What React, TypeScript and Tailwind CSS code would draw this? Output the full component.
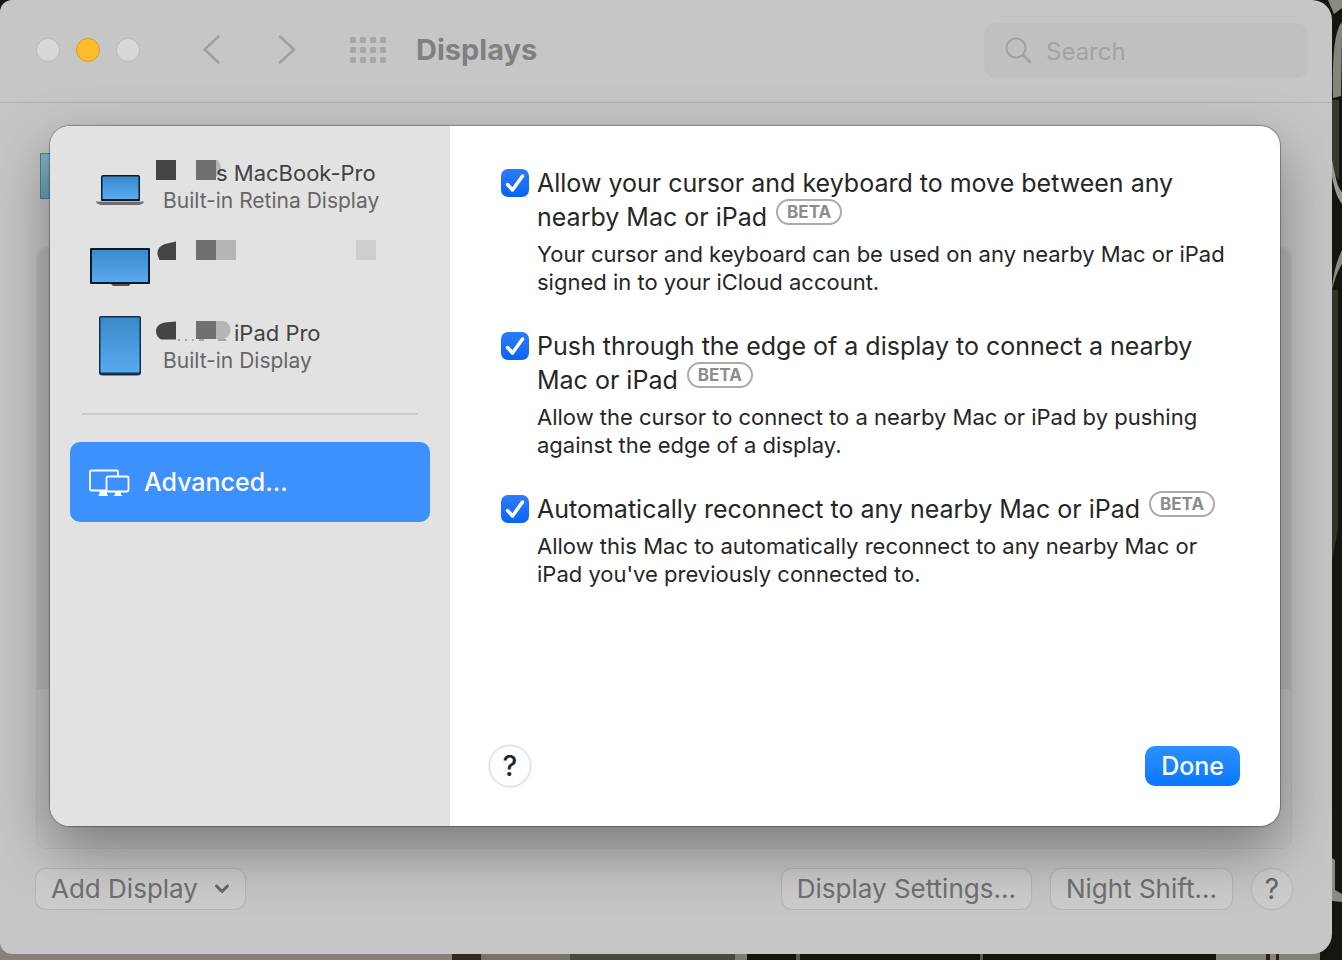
import { useState } from "react";

interface Option {
  id: string;
  title: string;
  description: string;
}

const OPTIONS: Option[] = [
  {
    id: "cursor",
    title: "Allow your cursor and keyboard to move between any nearby Mac or iPad",
    description:
      "Your cursor and keyboard can be used on any nearby Mac or iPad signed in to your iCloud account.",
  },
  {
    id: "edge",
    title: "Push through the edge of a display to connect a nearby Mac or iPad",
    description:
      "Allow the cursor to connect to a nearby Mac or iPad by pushing against the edge of a display.",
  },
  {
    id: "reconnect",
    title: "Automatically reconnect to any nearby Mac or iPad",
    description:
      "Allow this Mac to automatically reconnect to any nearby Mac or iPad you've previously connected to.",
  },
];

const DOTS = [0, 10, 20, 30];

function ScreenGradient({ id }: { id: string }) {
  return (
    <defs>
      <linearGradient id={id} x1="0" y1="0" x2="0" y2="1">
        <stop offset="0" stopColor="#3a8acb" />
        <stop offset="1" stopColor="#58aaf0" />
      </linearGradient>
    </defs>
  );
}

function MacBookIcon() {
  return (
    <svg width="60" height="60" viewBox="0 0 60 60" aria-hidden="true">
      <ScreenGradient id="macbook" />
      <rect x="11" y="19" width="39" height="27" rx="2" fill="#0b1a2b" />
      <rect x="12.5" y="20.5" width="36" height="22.5" fill="url(#macbook)" />
      <path d="M6.5 45h47v2l-4 2h-39l-4-2z" fill="#6d6d6d" />
      <path d="M7 45h46v1H7z" fill="#b5b5b5" />
    </svg>
  );
}

function MonitorIcon() {
  return (
    <svg width="60" height="60" viewBox="0 0 60 60" aria-hidden="true">
      <ScreenGradient id="monitor" />
      <path d="M20 47h21l-2 3H23z" fill="#55504c" />
      <rect x="0" y="12" width="60" height="36" rx="1" fill="#0b1a2b" />
      <rect x="2" y="14" width="56" height="32" fill="url(#monitor)" />
    </svg>
  );
}

function IPadIcon() {
  return (
    <svg width="60" height="60" viewBox="0 0 60 60" aria-hidden="true">
      <ScreenGradient id="ipad" />
      <rect x="10" y="2" width="40" height="58" rx="2.5" fill="#8b8b8b" />
      <rect x="9" y="0" width="42" height="59" rx="2" fill="#12304a" />
      <rect x="10.5" y="1.5" width="39" height="55" rx="1" fill="url(#ipad)" />
    </svg>
  );
}

function AdvancedIcon() {
  return (
    <svg width="42" height="28" viewBox="0 0 42 28" fill="none" stroke="#fff" aria-hidden="true">
      <path
        d="M18 21.5H3.5A1.5 1.5 0 0 1 2 20V3A1.5 1.5 0 0 1 3.5 1.5h25A1.5 1.5 0 0 1 30 3v4"
        strokeWidth="1.8"
      />
      <rect x="18.5" y="7.5" width="22" height="15" rx="1.5" strokeWidth="1.8" />
      <path d="M12 22h7v3l1 2h-9.5zM27 23h6v2.5l1.5 1.5h-9l1.5-1.5z" fill="#fff" stroke="none" />
    </svg>
  );
}

function Wallpaper() {
  return (
    <div className="absolute inset-0 overflow-hidden bg-[#15150f]" aria-hidden="true">
      <svg className="absolute right-0 top-0" width="20" height="960" viewBox="0 0 20 960">
        <path d="M6 0h14v8L12 14z" fill="#8b8b84" />
        <path d="M20 22c-8 8-10 40-9 76l8-2 1-60z" fill="#85857e" />
        <path d="M10 100h7v80l-7-8z" fill="#3a3a2c" />
        <path d="M10 160c4 20 6 28 10 32v12c-5-6-8-16-10-28z" fill="#9a9a95" />
        <path d="M20 250c-5 10-9 24-10 40 3-12 6-20 10-26z" fill="#8b8b84" />
        <path d="M10 290h6v240l-6 30z" fill="#33332a" />
        <path d="M10 858l3 2v30l7 4v8l-10-1z" fill="#8b8b83" />
      </svg>
      <svg
        className="absolute bottom-0 left-0 h-5 w-full"
        viewBox="0 0 1342 20"
        preserveAspectRatio="none"
      >
        <path d="M0 0h452v20H0z" fill="#85827c" />
        <path d="M452 0h29v20h-29z" fill="#2c2823" />
        <path d="M481 0h89v20h-89z" fill="#74716f" />
        <path d="M570 0h165v20H570z" fill="#4a4843" />
        <path d="M735 0h12v20h-12z" fill="#7b7a75" />
        <path d="M796 0h4v20h-4zM980 0h3v20h-3z" fill="#5a5952" />
        <path d="M1216 0h104v20h-104z" fill="#83827f" />
        <path d="M1266 0h4v20h-4zM1276 0h3v20h-3z" fill="#2e2119" />
      </svg>
    </div>
  );
}

function TitleBar() {
  return (
    <header className="flex h-[103px] items-center border-b border-[#adadad] pb-0.5 pl-9 pr-6">
      <div className="flex gap-4">
        <button type="button" aria-label="Close" className="size-6 rounded-full border border-[#b9b9b8] bg-[#d8d9d6]" />
        <button type="button" aria-label="Minimize" className="size-6 rounded-full border border-[#d99a2b] bg-[#febb2d]" />
        <button type="button" aria-label="Zoom" className="size-6 rounded-full border border-[#b9b9b8] bg-[#d8d9d6]" />
      </div>
      <div className="ml-[62px] flex items-center gap-[54px]">
        <button type="button" aria-label="Back">
          <svg width="20" height="30" viewBox="0 0 20 30" fill="none" stroke="#a0a0a0" strokeWidth="2.5" strokeLinecap="round" strokeLinejoin="round">
            <path d="M16.5 1.5L2.5 14.5l14 13" />
          </svg>
        </button>
        <button type="button" aria-label="Forward">
          <svg width="20" height="30" viewBox="0 0 20 30" fill="none" stroke="#a0a0a0" strokeWidth="2.5" strokeLinecap="round" strokeLinejoin="round">
            <path d="M4 1.5l14 13-14 13" />
          </svg>
        </button>
      </div>
      <button type="button" aria-label="Show all" className="ml-[54px]">
        <svg width="36" height="26" viewBox="0 0 36 26" fill="#a6a6a6">
          {DOTS.map((x) =>
            DOTS.slice(0, 3).map((y) => <rect key={`${x}-${y}`} x={x} y={y} width="6" height="6" rx="1.5" />)
          )}
        </svg>
      </button>
      <h1 className="ml-[30px] text-[29px] leading-8 font-bold text-[#808080]">Displays</h1>
      <label className="ml-auto flex h-[55px] w-[324px] items-center gap-[14px] rounded-xl bg-[#c0c0c0] pl-5">
        <svg width="28" height="28" viewBox="0 0 28 28" fill="none" stroke="#a0a0a0" strokeWidth="2" strokeLinecap="round" aria-hidden="true">
          <circle cx="12" cy="12" r="9.5" />
          <path d="M19 19l7 7" strokeWidth="2.5" />
        </svg>
        <input
          type="search"
          placeholder="Search"
          aria-label="Search"
          className="min-w-0 flex-1 bg-transparent pt-1 text-[24px] leading-8 outline-none placeholder:text-[#a3a3a3]"
        />
      </label>
    </header>
  );
}

function Sidebar() {
  return (
    <aside className="flex w-[400px] shrink-0 flex-col bg-[#e2e2e2] px-5 pt-[30px]">
      <ul className="flex flex-col gap-5 px-5 text-[22px]">
        <li className="flex h-[60px]">
          <MacBookIcon />
          {/* pixelated owner name */}
          <div className="ml-[6px]">
            <p className="flex h-[34px] leading-[34px] text-[#424242]">
              <svg width="60" height="34" viewBox="0 0 60 34" overflow="visible" aria-hidden="true">
                <rect x="0" y="4" width="20" height="20" fill="#444" />
                <path d="M60 4h2l3 6v6l-5 5z" fill="#b5b5b5" />
                <rect x="40" y="4" width="20" height="20" fill="#707070" />
              </svg>
              s MacBook-Pro
            </p>
            <p className="pl-[7px] text-[21px] leading-[22px] text-[#666]">Built-in Retina Display</p>
          </div>
        </li>
        <li className="flex h-[60px]">
          <MonitorIcon />
          <svg className="ml-[6px]" width="224" height="40" viewBox="0 0 224 40" aria-hidden="true">
            <path d="M20 5.5L9 8C3 10 1 14 1.5 19l2 5H20z" fill="#444" />
            <rect x="40" y="4" width="20" height="20" fill="#707070" />
            <rect x="60" y="4" width="20" height="20" fill="#b5b5b5" />
            <rect x="200" y="4" width="20" height="20" fill="#cecece" />
          </svg>
        </li>
        <li className="flex h-[60px]">
          <IPadIcon />
          <div className="ml-[6px]">
            <p className="flex h-[34px] leading-[34px] text-[#424242]">
              <svg width="78" height="34" viewBox="0 0 78 34" aria-hidden="true">
                <path d="M20 5.5L9 6.5C3 7.5 0 11 0 15c0 4 2 7 5 8.5h15z" fill="#444" />
                <path d="M22 24h2M29 24h2M36 24h2M43 24h5M62 24h8" stroke="#666" />
                <rect x="40" y="5" width="20" height="18" fill="#707070" />
                <path d="M60 5h7c10 2 10 16 0 18h-7z" fill="#b5b5b5" />
              </svg>
              iPad Pro
            </p>
            <p className="pl-[7px] text-[21px] leading-[22px] text-[#666]">Built-in Display</p>
          </div>
        </li>
      </ul>
      <hr className="mx-3 mt-[37px] border-t-2 border-[#cacaca]" />
      <button
        type="button"
        className="mt-[27px] flex h-20 items-center gap-[14px] rounded-[10px] bg-[#3c91fe] pl-[18px] pt-0.5 text-[25px] font-medium text-white"
      >
        <AdvancedIcon />
        Advanced...
      </button>
    </aside>
  );
}

function OptionRow({ option }: { option: Option }) {
  const [checked, setChecked] = useState(true);

  return (
    <div className="flex gap-2">
      <span className="relative mt-[3px] size-7 shrink-0">
        <input
          id={option.id}
          type="checkbox"
          checked={checked}
          onChange={(e) => setChecked(e.target.checked)}
          className="peer block size-7 appearance-none rounded-[7px] bg-gray-200 checked:bg-linear-to-b checked:from-[#2b7cf7] checked:to-[#0663f8]"
        />
        <svg
          className="pointer-events-none absolute inset-0 hidden peer-checked:block"
          width="28"
          height="28"
          viewBox="0 0 28 28"
          fill="none"
          aria-hidden="true"
        >
          <path d="M6.5 15.5l5 5.5L21.5 7" stroke="#fff" strokeWidth="3.5" strokeLinecap="round" strokeLinejoin="round" />
        </svg>
      </span>
      <div className="min-w-0">
        <label htmlFor={option.id} className="block text-[25px] leading-[34px] text-[#262626]">
          {option.title}{" "}
          <span className="-my-1 ml-[2px] inline-block h-[26px] rounded-full border-2 border-[#ababab] px-[9px] align-[8px] text-[17px] leading-[22px] font-bold text-[#8c8c8c]">
            BETA
          </span>
        </label>
        <p className="mt-[6px] text-[22px] leading-7 text-[#262626]">{option.description}</p>
      </div>
    </div>
  );
}

function AdvancedSheet() {
  return (
    <div
      role="dialog"
      aria-label="Advanced"
      className="absolute left-[50px] right-[52px] top-[126px] flex min-h-[700px] overflow-hidden rounded-[20px] bg-white shadow-[0_0_1px_1px_rgba(0,0,0,0.3),0_24px_60px_rgba(0,0,0,0.38)]"
    >
      <Sidebar />
      <section className="flex min-w-0 flex-1 flex-col p-10">
        <div className="flex flex-col gap-[33px] pl-[11px]">
          {OPTIONS.map((option) => (
            <OptionRow key={option.id} option={option} />
          ))}
        </div>
        <div className="mt-auto flex items-center justify-between">
          <button
            type="button"
            aria-label="Help"
            className="size-10 rounded-full bg-white text-[28px] leading-10 font-medium text-[#262626] shadow-[0_0_2px_1px_rgba(0,0,0,0.2)]"
          >
            ?
          </button>
          <button
            type="button"
            className="h-10 rounded-[10px] bg-linear-to-b from-[#2b90ff] to-[#0678fe] px-4 text-[25px] leading-10 font-medium text-white"
          >
            Done
          </button>
        </div>
      </section>
    </div>
  );
}

const FOOTER_BUTTON =
  "flex h-10 items-center rounded-[10px] bg-white/10 px-[15px] text-[26px] leading-10 text-[#707070] shadow-[0_0_1px_1px_rgba(0,0,0,0.09)]";

export default function App() {
  return (
    <div className="relative min-h-screen pb-[6px] pr-[10px] font-['Inter',sans-serif]">
      <Wallpaper />
      <div className="relative flex min-h-[954px] flex-col overflow-hidden rounded-l-xl rounded-r-[20px] bg-[#c6c6c6]">
        <TitleBar />
        <main className="flex flex-1 flex-col pb-[45px] pl-9 pr-10 pt-[50px]">
          <div className="ml-1 h-[46px] w-20 border border-[#4f7f8f] bg-linear-to-b from-[#86b4c4] to-[#6ba0b4]" />
          <div className="mt-12 flex flex-1 flex-col rounded-[10px] border border-black/4 bg-black/1">
            <div className="h-[441px] rounded-t-[10px] bg-black/5" />
          </div>
          <div className="mt-5 flex items-center gap-5">
            <button type="button" className={FOOTER_BUTTON}>
              Add Display
              <svg className="ml-4" width="16" height="12" viewBox="0 0 16 12" fill="none" aria-hidden="true">
                <path d="M2.5 3L8 8.5 13.5 3" stroke="#666" strokeWidth="3" strokeLinecap="round" strokeLinejoin="round" />
              </svg>
            </button>
            <button type="button" className={`ml-auto ${FOOTER_BUTTON}`}>
              Display Settings...
            </button>
            <button type="button" className={FOOTER_BUTTON}>
              Night Shift...
            </button>
            <button
              type="button"
              aria-label="Help"
              className="size-10 rounded-full bg-white/10 text-[28px] leading-10 text-[#666] shadow-[0_0_1px_1px_rgba(0,0,0,0.09)]"
            >
              ?
            </button>
          </div>
        </main>
        <AdvancedSheet />
      </div>
    </div>
  );
}
